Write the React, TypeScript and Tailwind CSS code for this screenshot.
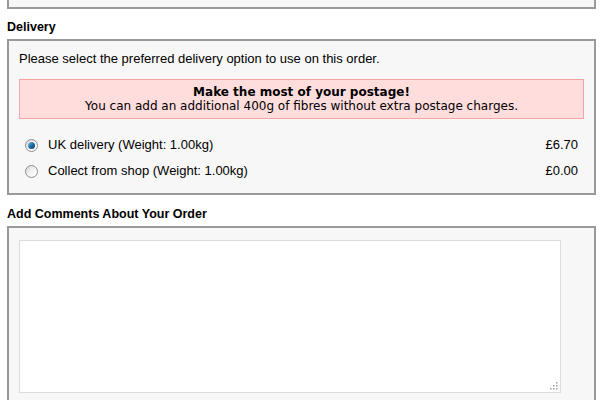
import React from "react"

const options = [
  { label: "UK delivery (Weight: 1.00kg)", price: "£6.70", checked: true },
  { label: "Collect from shop (Weight: 1.00kg)", price: "£0.00", checked: false },
]

function Radio({ checked }: { checked: boolean }) {
  return (
    <span className="relative flex h-[13px] w-[13px] items-center justify-center rounded-full border border-[#8e8f8f] bg-gradient-to-br from-[#d5d5d5] via-[#f4f4f4] to-[#ffffff]">
      {checked && (
        <span className="h-[7px] w-[7px] rounded-full bg-gradient-to-br from-[#7fc3e8] via-[#1e6fa8] to-[#0a3e66]" />
      )}
    </span>
  )
}

// dotted resize grip, like the old browser one
function Grip() {
  return (
    <svg width="8" height="8" viewBox="0 0 8 8" className="absolute right-[3px] bottom-[3px]">
      {[[6, 0], [6, 3], [3, 3], [6, 6], [3, 6], [0, 6]].map(([x, y]) => (
        <rect key={`${x}-${y}`} x={x} y={y} width="1.5" height="1.5" fill="#a0a0a0" />
      ))}
    </svg>
  )
}

export default function App() {
  return (
    <div className="h-[400px] w-[600px] overflow-hidden bg-white pl-[7px] pr-[4px] text-[13px] leading-[16px] text-black font-['Liberation_Sans',Arial,sans-serif]">
      <div className="h-[9px] border-2 border-t-0 border-[#999] bg-[#f7f7f7]" />

      <h2 className="mt-[10px] mb-[4px] text-[12.5px] font-bold">Delivery</h2>
      <div className="border-2 border-[#999] bg-[#f7f7f7] px-[10px] pt-[10px] pb-[9px]">
        <p>Please select the preferred delivery option to use on this order.</p>
        <div className="mt-[12px] border border-[#f5a3a3] bg-[#ffdddd] py-[5px] text-center text-[12px] leading-[14px] font-['DejaVu_Sans',Verdana,sans-serif]">
          <div className="font-bold">Make the most of your postage!</div>
          <div>You can add an additional 400g of fibres without extra postage charges.</div>
        </div>
        <div className="mt-[13px]">
          {options.map((o) => (
            <div key={o.label} className="flex h-[26px] items-center pl-[6px] pr-[6px]">
              <Radio checked={o.checked} />
              <span className="ml-[10px] flex-1">{o.label}</span>
              <span>{o.price}</span>
            </div>
          ))}
        </div>
      </div>

      <h2 className="mt-[11px] mb-[4px] text-[12.5px] font-bold">Add Comments About Your Order</h2>
      <div className="h-[200px] border-2 border-[#999] bg-[#f7f7f7] px-[10px] pt-[12px]">
        <div className="relative w-[542px]">
          <textarea className="block h-[153px] w-full resize-none border border-[#dcdcdc] bg-white outline-none" />
          <Grip />
        </div>
      </div>
    </div>
  )
}
